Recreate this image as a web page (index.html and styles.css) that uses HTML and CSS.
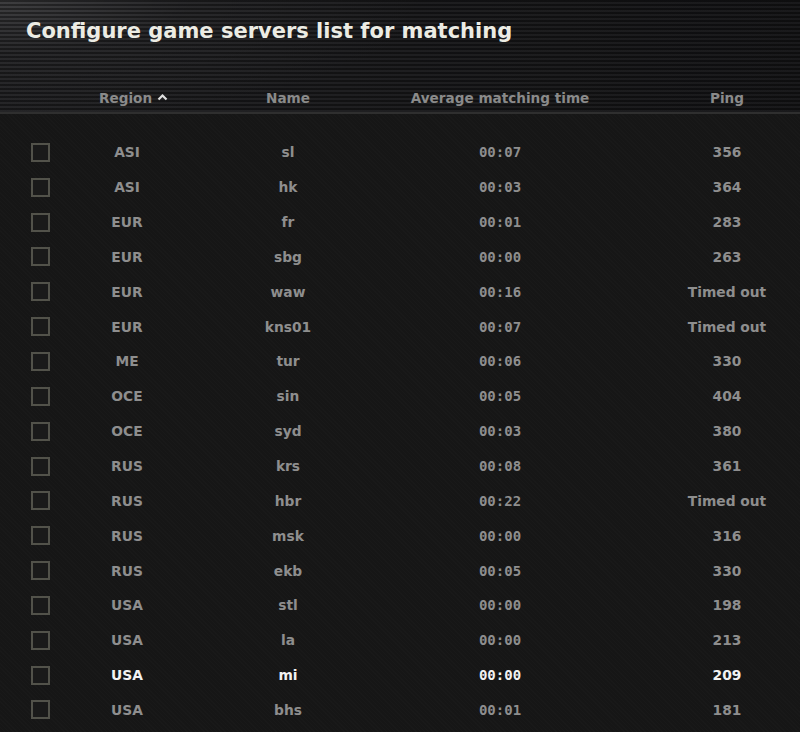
FILE: index.html
```html
<!DOCTYPE html>
<html>
<head>
<meta charset="utf-8">
<link rel="stylesheet" href="styles.css">
</head>
<body>
<div class="panel">
  <header class="top">
    <h1 class="title">Configure game servers list for matching</h1>
    <div class="cols">
      <div></div>
      <div class="hcell region-h">Region <svg class="caret" width="11" height="8" viewBox="0 0 11 8"><path d="M1.5 6.5 L5.5 2.5 L9.5 6.5" fill="none" stroke="#e0e0e0" stroke-width="2.2"/></svg></div>
      <div class="hcell">Name</div>
      <div class="hcell">Average matching time</div>
      <div></div>
      <div class="hcell">Ping</div>
    </div>
  </header>
  <div class="list">
    <div class="row"><span class="box"></span><span class="c">ASI</span><span class="c">sl</span><span class="c t">00:07</span><span></span><span class="c">356</span></div>
    <div class="row"><span class="box"></span><span class="c">ASI</span><span class="c">hk</span><span class="c t">00:03</span><span></span><span class="c">364</span></div>
    <div class="row"><span class="box"></span><span class="c">EUR</span><span class="c">fr</span><span class="c t">00:01</span><span></span><span class="c">283</span></div>
    <div class="row"><span class="box"></span><span class="c">EUR</span><span class="c">sbg</span><span class="c t">00:00</span><span></span><span class="c">263</span></div>
    <div class="row"><span class="box"></span><span class="c">EUR</span><span class="c">waw</span><span class="c t">00:16</span><span></span><span class="c">Timed out</span></div>
    <div class="row"><span class="box"></span><span class="c">EUR</span><span class="c">kns01</span><span class="c t">00:07</span><span></span><span class="c">Timed out</span></div>
    <div class="row"><span class="box"></span><span class="c">ME</span><span class="c">tur</span><span class="c t">00:06</span><span></span><span class="c">330</span></div>
    <div class="row"><span class="box"></span><span class="c">OCE</span><span class="c">sin</span><span class="c t">00:05</span><span></span><span class="c">404</span></div>
    <div class="row"><span class="box"></span><span class="c">OCE</span><span class="c">syd</span><span class="c t">00:03</span><span></span><span class="c">380</span></div>
    <div class="row"><span class="box"></span><span class="c">RUS</span><span class="c">krs</span><span class="c t">00:08</span><span></span><span class="c">361</span></div>
    <div class="row"><span class="box"></span><span class="c">RUS</span><span class="c">hbr</span><span class="c t">00:22</span><span></span><span class="c">Timed out</span></div>
    <div class="row"><span class="box"></span><span class="c">RUS</span><span class="c">msk</span><span class="c t">00:00</span><span></span><span class="c">316</span></div>
    <div class="row"><span class="box"></span><span class="c">RUS</span><span class="c">ekb</span><span class="c t">00:05</span><span></span><span class="c">330</span></div>
    <div class="row"><span class="box"></span><span class="c">USA</span><span class="c">stl</span><span class="c t">00:00</span><span></span><span class="c">198</span></div>
    <div class="row"><span class="box"></span><span class="c">USA</span><span class="c">la</span><span class="c t">00:00</span><span></span><span class="c">213</span></div>
    <div class="row hl"><span class="box"></span><span class="c">USA</span><span class="c">mi</span><span class="c t">00:00</span><span></span><span class="c">209</span></div>
    <div class="row"><span class="box"></span><span class="c">USA</span><span class="c">bhs</span><span class="c t">00:01</span><span></span><span class="c">181</span></div>
  </div>
</div>
</body>
</html>
```
FILE: styles.css
```css
html, body {
  margin: 0;
  padding: 0;
  background: #151515;
}
body {
  width: 800px;
  height: 732px;
  overflow: hidden;
  font-family: "DejaVu Sans", "Liberation Sans", sans-serif;
}
.panel {
  width: 800px;
  height: 732px;
  background:
    repeating-linear-gradient(45deg, rgba(255,255,255,0.012) 0 1px, transparent 1px 3px),
    #161616;
}
.top {
  height: 114px;
  box-sizing: border-box;
  border-bottom: 2px solid #2f2f2f;
  background:
    repeating-linear-gradient(180deg, rgba(0,0,0,0.35) 0 2px, rgba(255,255,255,0.02) 2px 4px),
    radial-gradient(ellipse 420px 120px at 0 0, #3a3a3c 0%, rgba(40,40,42,0.6) 45%, rgba(20,20,22,0) 100%),
    linear-gradient(90deg, #202022 0%, #19191b 60%, #151517 100%);
  display: flex;
  flex-direction: column;
}
.title {
  margin: 0;
  padding: 17px 0 0 26px;
  font-size: 21px;
  font-weight: bold;
  color: #ecece4;
  line-height: 28px;
}
.cols {
  margin-top: auto;
  height: 29px;
  display: grid;
  grid-template-columns: 70px 114px 208px 216px 46px 146px;
  align-items: center;
}
.hcell {
  text-align: center;
  color: #8a8a8a;
  font-size: 13.6px;
  font-weight: bold;
  white-space: nowrap;
}
.region-h {
  text-align: left;
  padding-left: 29px;
}
.caret {
  vertical-align: 2px;
}
.list {
  padding-top: 21px;
}
.row {
  height: 34.85px;
  display: grid;
  grid-template-columns: 70px 114px 208px 216px 46px 146px;
  align-items: center;
  color: #8e8e8e;
  font-size: 13.8px;
  font-weight: bold;
}
.box {
  width: 15px;
  height: 15px;
  margin-left: 31px;
  border: 2px solid #52524a;
  background: #1a1a1a;
}
.c {
  text-align: center;
  white-space: nowrap;
}
.t {
  font-family: "DejaVu Sans Mono", monospace;
  font-size: 14px;
}
.hl {
  color: #f2f2f2;
}
```
